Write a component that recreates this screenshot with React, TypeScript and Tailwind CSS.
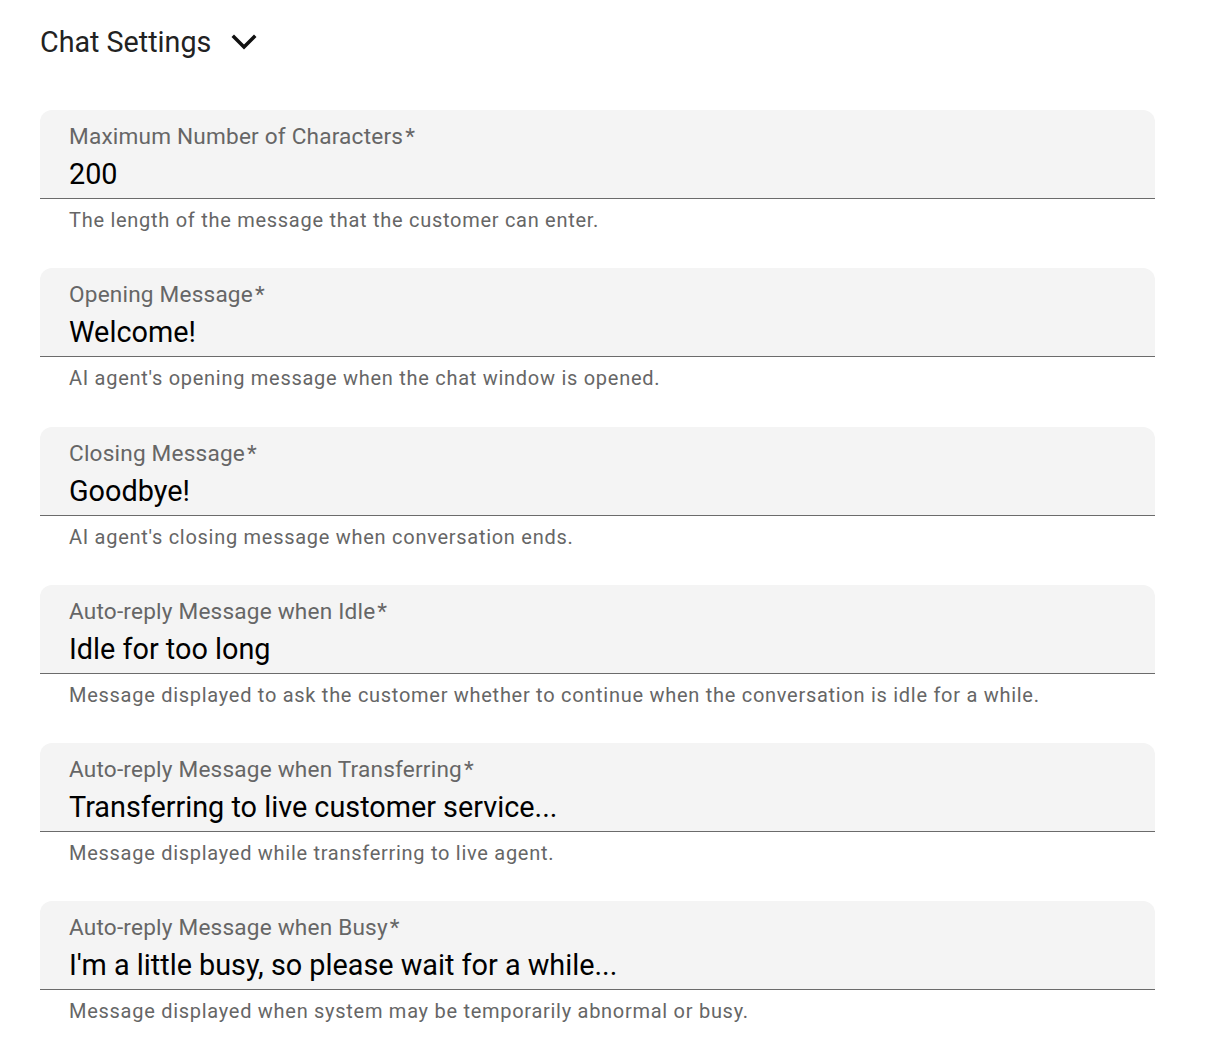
import React from "react";

type Field = { label: string; value: string; helper: string };

const fields: Field[] = [
  {
    label: "Maximum Number of Characters",
    value: "200",
    helper: "The length of the message that the customer can enter.",
  },
  {
    label: "Opening Message",
    value: "Welcome!",
    helper: "AI agent's opening message when the chat window is opened.",
  },
  {
    label: "Closing Message",
    value: "Goodbye!",
    helper: "AI agent's closing message when conversation ends.",
  },
  {
    label: "Auto-reply Message when Idle",
    value: "Idle for too long",
    helper:
      "Message displayed to ask the customer whether to continue when the conversation is idle for a while.",
  },
  {
    label: "Auto-reply Message when Transferring",
    value: "Transferring to live customer service...",
    helper: "Message displayed while transferring to live agent.",
  },
  {
    label: "Auto-reply Message when Busy",
    value: "I'm a little busy, so please wait for a while...",
    helper: "Message displayed when system may be temporarily abnormal or busy.",
  },
];

const SettingField = ({ label, value, helper }: Field) => {
  return (
    <div className="flex flex-col">
      <div className="flex flex-col bg-[#f4f4f4] rounded-t-[12px] border-b border-[#6b6b6b] px-[29px] pt-[15px] pb-[7px]">
        <span className="text-[22.6px] leading-[24px] text-[#666666] tracking-[0.2px]">
          {label}
          <span className="ml-[2px]">*</span>
        </span>
        <span className="mt-[8px] text-[28.8px] leading-[34px] text-black">{value}</span>
      </div>
      <div className="px-[29px] mt-[9px] text-[20px] leading-[24px] text-[#666666] tracking-[0.72px]">
        {helper}
      </div>
    </div>
  );
};

export default function App() {
  return (
    <div className="w-full min-h-screen bg-white font-['Roboto',sans-serif] px-[40px] pt-[25px]">
      <div className="flex flex-row items-center gap-[20px] h-[34px]">
        <span className="text-[28.7px] leading-[34px] text-[#222222]">Chat Settings</span>
        <svg width="26" height="18" viewBox="0 0 26 18" fill="none">
          <polyline
            points="3,4 13,14 23,4"
            stroke="#111111"
            strokeWidth="3.5"
            strokeLinecap="square"
          />
        </svg>
      </div>
      <div className="w-[1115px] flex flex-col gap-[36.25px] mt-[51px]">
        {fields.map((f) => (
          <SettingField key={f.label} {...f} />
        ))}
      </div>
    </div>
  );
}
